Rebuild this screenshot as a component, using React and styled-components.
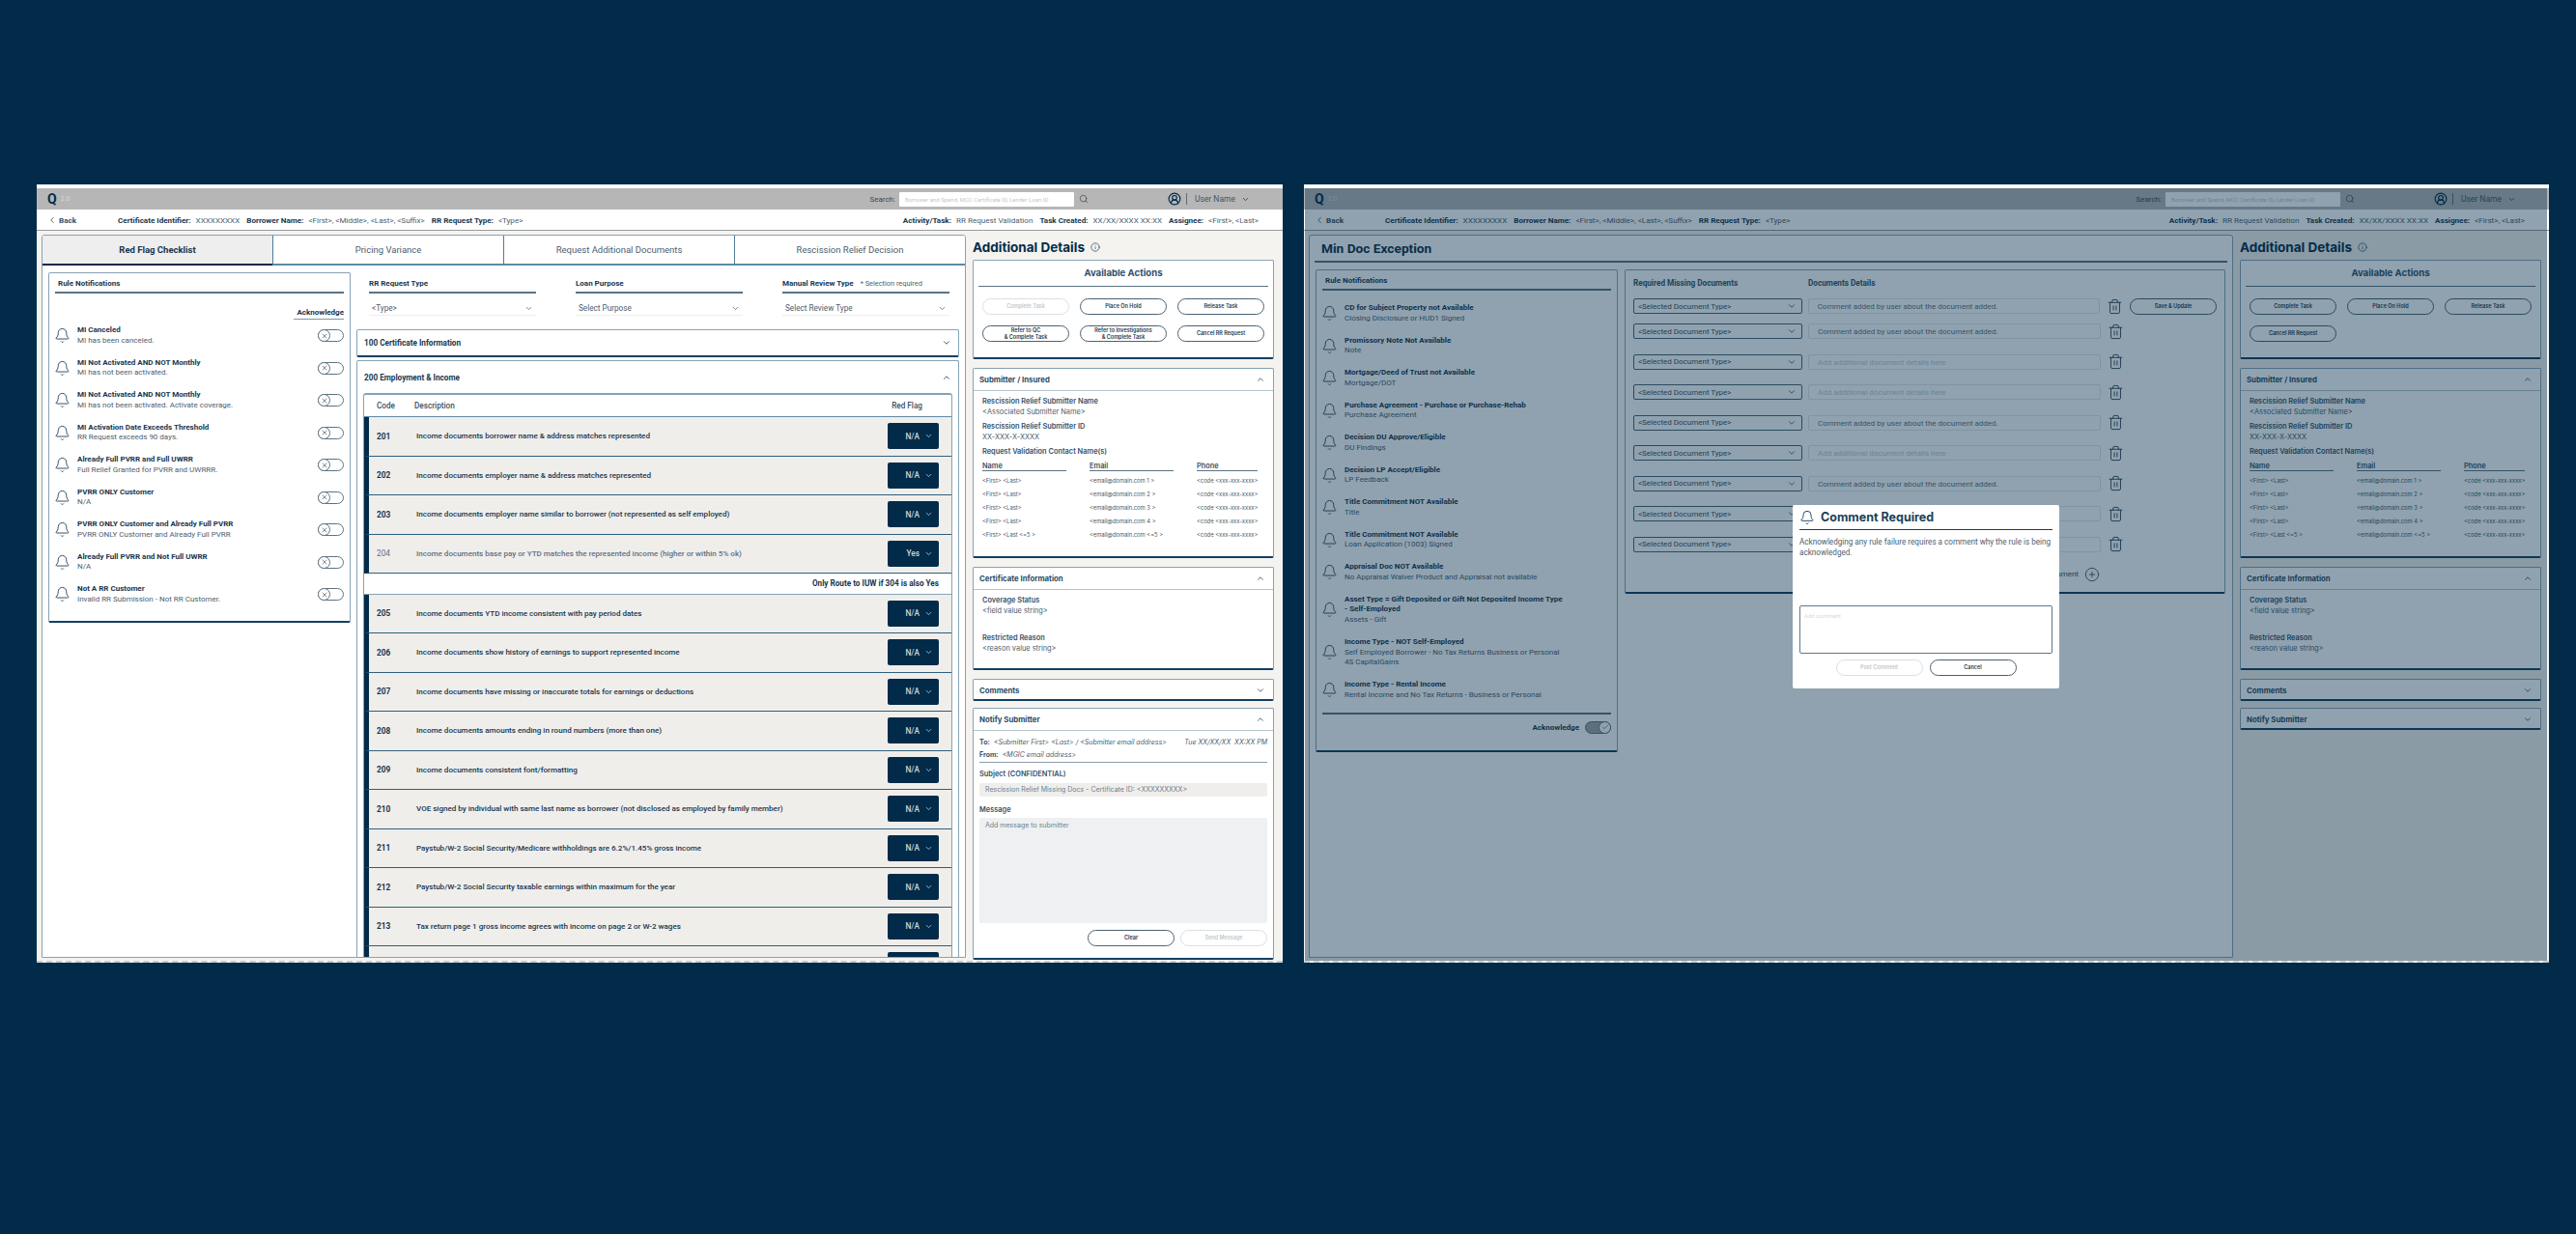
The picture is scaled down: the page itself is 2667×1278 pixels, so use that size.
import React from 'react';
import styled, { createGlobalStyle } from 'styled-components';
import { Bell, Check, ChevronDown, ChevronLeft, ChevronUp, CirclePlus, CircleUserRound, Info, Search, Trash2, X } from 'lucide-react';

const navy = '#022b49';
const ink = '#17364f';
const soft = '#4c6070';
const line = '#86a3b6';

const Global = createGlobalStyle`
  * { box-sizing: border-box; }
  body { margin: 0; background: ${navy}; font-family: Roboto, sans-serif; color: ${ink}; }
`;

const Page = styled.div`
  height: 1278px;
  overflow: hidden;
  background: ${navy};
  padding: 191px 0 0 38px;
  display: flex;
  gap: 22px;
`;

const Frame = styled.div`
  position: relative;
  width: ${p => p.$width}px;
  height: 806px;
  flex: none;
  display: flex;
  flex-direction: column;
  overflow: hidden;
  background: #f5f3ef;
  border-top: 4px solid #fff;
  border-bottom: 2px dashed #c9cdd0;
`;

const Overlay = styled.div`
  position: absolute;
  inset: -2px 2px -2px 1px;
  background: rgba(2, 43, 73, 0.44);
`;

/* top grey bar */
const TopBar = styled.div`
  height: 22px;
  flex: none;
  display: flex;
  align-items: center;
  background: #b6b6b6;
  padding: 0 34px 0 11px;
`;
const Logo = styled.span`
  font: 700 14px Roboto, sans-serif;
  color: ${navy};
`;
const LogoVersion = styled.span`
  margin-left: 4px;
  font-size: 7px;
  color: #d6d6d6;
`;
const SearchLabel = styled.span`
  margin-left: auto;
  margin-right: 4px;
  font-size: 8px;
  color: #3d4a54;
`;
const SearchBox = styled.div`
  width: 181px;
  height: 15px;
  background: #fff;
  border-radius: 1px;
  padding-left: 6px;
  font-size: 6px;
  line-height: 15px;
  color: #c4c7ca;
  white-space: nowrap;
  overflow: hidden;
`;
const SearchIcon = styled(Search)`
  margin: 0 82px 0 5px;
  color: #4b5a66;
`;
const UserIcon = styled(CircleUserRound)`
  color: ${navy};
`;
const Divider = styled.span`
  width: 1px;
  height: 12px;
  background: #5c6b76;
  margin: 0 8px 0 5px;
`;
const UserName = styled.span`
  font-size: 8.5px;
  color: #45545f;
  margin-right: 6px;
`;

/* certificate row */
const InfoRow = styled.div`
  height: 22px;
  flex: none;
  display: flex;
  align-items: center;
  gap: 5px;
  background: #fff;
  border-bottom: 1px solid #9b9b9b;
  padding: 0 23px 0 11px;
  font-size: 8.1px;
  white-space: nowrap;
`;
const BackLink = styled.span`
  display: flex;
  align-items: center;
  gap: 2px;
  width: 68px;
  font-weight: 700;
  color: #3d5060;
`;
const InfoLabel = styled.b`
  color: ${ink};
`;
const InfoValue = styled.span`
  color: ${soft};
  margin-right: 2px;
`;
const Spacer = styled.span`
  flex: 1;
`;

const Body = styled.div`
  flex: 1;
  min-height: 0;
  display: flex;
  align-items: flex-start;
  gap: 7px;
  padding: 4px 0 0 5px;
`;
const Main = styled.div`
  width: 957px;
  height: 749px;
  flex: none;
  background: #fff;
  border: 1px solid ${line};
  border-radius: 3px 3px 0 0;
  overflow: hidden;
`;

/* tabs */
const Tabs = styled.div`
  display: flex;
  height: 31px;
`;
const Tab = styled.div`
  flex: 1;
  display: flex;
  align-items: center;
  justify-content: center;
  font-size: 9.5px;
  font-weight: ${p => (p.$active ? 700 : 400)};
  color: ${p => (p.$active ? ink : soft)};
  background: ${p => (p.$active ? '#eeeeee' : '#fff')};
  border-bottom: 2px solid ${p => (p.$active ? navy : '#5f8aa6')};
  & + & { border-left: 1px solid #4f7b98; }
`;
const Content = styled.div`
  display: grid;
  grid-template-columns: 313px 624px;
  gap: 6px;
  align-items: start;
  padding: 7px 0 0 6px;
`;

const Card = styled.div`
  background: #fff;
  border: 1px solid ${line};
  border-bottom: 2px solid #123f60;
  border-radius: 2px;
`;

/* rule list */
const RuleCard = styled(Card)`
  padding: 0 6px;
  height: ${p => p.$height}px;
`;
const CardTitle = styled.div`
  height: 21px;
  padding: 6px 0 0 3px;
  border-bottom: 2px solid #5b7384;
  font-size: 8px;
  font-weight: 700;
`;
const RuleGap = styled.div`
  height: 7px;
`;
const AckHead = styled.div`
  display: flex;
  justify-content: flex-end;
  height: 27px;
  align-items: flex-end;
`;
const AckLabel = styled.span`
  font-size: 8px;
  font-weight: 700;
  padding: 0 0 2px 3px;
  border-bottom: 1px solid #7f97a8;
`;
const RuleRow = styled.div`
  display: flex;
  align-items: center;
  padding: 6px 0;
`;
const RuleBell = styled(Bell)`
  flex: none;
  margin: 0 7px 0 -1px;
  color: #2a4358;
`;
const RuleText = styled.div`
  flex: 1;
  font-size: 8px;
  line-height: 10.75px;
  white-space: pre-wrap;
`;
const RuleTitle = styled.div`
  font-weight: 700;
`;
const RuleSub = styled.div`
  color: ${soft};
`;
const ToggleTrack = styled.span`
  width: 27px;
  height: 13px;
  flex: none;
  display: flex;
  justify-content: ${p => (p.$on ? 'flex-end' : 'flex-start')};
  border: 1px solid #5d7383;
  border-radius: 7px;
  background: ${p => (p.$on ? '#a5a5a5' : '#fff')};
`;
const ToggleKnob = styled.span`
  width: 13px;
  height: 13px;
  margin: -1px;
  display: flex;
  align-items: center;
  justify-content: center;
  border: 1px solid #5d7383;
  border-radius: 50%;
  background: #fff;
  color: #42596b;
`;
const AckFoot = styled.div`
  display: flex;
  align-items: center;
  justify-content: flex-end;
  gap: 6px;
  margin-top: 6px;
  padding-top: 7px;
  border-top: 2px solid #5b7384;
  font-size: 8px;
  font-weight: 700;
`;

/* right part of red flag tab */
const FieldGrid = styled.div`
  display: grid;
  grid-template-columns: repeat(3, 173px);
  gap: 41px;
  margin: 0 0 14px 13px;
`;
const FieldLabel = styled.div`
  height: 22px;
  padding-top: 7px;
  border-bottom: 2px solid #5b7384;
  font-size: 8px;
  font-weight: 700;
  white-space: nowrap;
`;
const Required = styled.span`
  margin-left: 7px;
  font-size: 7.4px;
  font-weight: 400;
  color: ${soft};
`;
const FieldSelect = styled.div`
  height: 15px;
  margin-top: 8px;
  padding: 0 3px;
  display: flex;
  align-items: center;
  justify-content: space-between;
  font-size: 8.2px;
  color: ${soft};
  border-bottom: 1px solid #eeeeee;
`;
const SectionCard = styled(Card)`
  margin-bottom: 3px;
`;
const SectionHead = styled.div`
  height: ${p => p.$height}px;
  display: flex;
  align-items: center;
  justify-content: space-between;
  padding: 0 7px;
  font-size: 8.2px;
  font-weight: 700;
  color: ${ink};
`;
const OpenCard = styled(Card)`
  border-bottom: 0;
`;
const Table = styled.div`
  margin: 0 6px;
  border: 1px solid ${line};
  border-top-width: 2px;
  border-radius: 3px 3px 0 0;
`;
const TableHead = styled.div`
  height: 23px;
  display: flex;
  align-items: center;
  font-size: 8.2px;
  font-weight: 500;
  color: #3b5163;
  padding: 0 17px 0 13px;
  border-bottom: 1px solid #5f8aa6;
`;
const HeadCode = styled.span`
  width: 39px;
`;
const HeadFlag = styled.span`
  margin-left: auto;
  margin-right: 13px;
`;
const Row = styled.div`
  height: 40.5px;
  display: flex;
  align-items: center;
  background: #f0eeeb;
  border-left: 5px solid ${navy};
  border-bottom: 1.5px solid #2e5f80;
  font-size: 8.05px;
  font-weight: 500;
  color: ${p => (p.$muted ? '#607181' : ink)};
`;
const RowCode = styled.span`
  width: 49px;
  flex: none;
  padding-left: 8px;
  font-size: 8.3px;
  font-weight: ${p => (p.$muted ? 400 : 700)};
`;
const RowText = styled.span`
  flex: 1;
`;
const FlagSelect = styled.div`
  width: 53px;
  height: 27px;
  margin-right: 13px;
  flex: none;
  display: flex;
  align-items: center;
  justify-content: flex-end;
  gap: 5px;
  padding-right: 6px;
  background: ${navy};
  border-radius: 2px;
  color: #c9d5dd;
  font-size: 8.3px;
`;
const RouteNote = styled.div`
  height: 21.5px;
  display: flex;
  align-items: center;
  justify-content: flex-end;
  padding-right: 13px;
  font-size: 8.2px;
  font-weight: 700;
  border-bottom: 1px solid ${line};
  background: #fff;
`;

/* side column */
const Side = styled.div`
  width: 312px;
  flex: none;
  display: flex;
  flex-direction: column;
  font-family: Inter, sans-serif;
`;
const SideTitle = styled.div`
  height: 26px;
  flex: none;
  display: flex;
  align-items: center;
  gap: 6px;
  font-size: 13.5px;
  font-weight: 700;
  color: ${navy};
`;
const ActionsCard = styled(Card)`
  height: 103px;
  flex: none;
  margin-bottom: 9px;
  padding: 0 5px;
`;
const ActionsTitle = styled.div`
  height: 27px;
  line-height: 26px;
  text-align: center;
  font-size: 9.6px;
  font-weight: 700;
  color: #30506a;
  border-bottom: 1px solid #5b7384;
`;
const ActionsGrid = styled.div`
  display: grid;
  grid-template-columns: repeat(3, 90px);
  gap: 11px 11px;
  justify-content: center;
  margin-top: 12px;
`;
const Pill = styled.div`
  width: 90px;
  height: 17px;
  flex: none;
  display: flex;
  align-items: center;
  justify-content: center;
  text-align: center;
  font: 600 5.5px/7px Inter, sans-serif;
  color: ${p => (p.$disabled ? '#c4c8cb' : '#1e3a50')};
  background: #fff;
  border: 1px solid ${p => (p.$disabled ? '#dcdfe1' : '#4a6274')};
  border-bottom-width: 1.5px;
  border-radius: 9px;
`;
const SideCard = styled(Card)`
  height: ${p => p.$height}px;
  flex: none;
  margin-bottom: ${p => p.$gap}px;
  overflow: hidden;
`;
const SideHead = styled.div`
  height: ${p => p.$height || 23}px;
  display: flex;
  align-items: center;
  justify-content: space-between;
  padding: 0 8px 0 6px;
  font-size: 7.8px;
  font-weight: 700;
  color: #2b4c66;
  border-bottom: ${p => (p.$open ? '1px solid #b5c4ce' : 0)};
`;
const SideBody = styled.div`
  padding: 6px 9px;
`;
const SideLabel = styled.div`
  font-size: 7.4px;
  font-weight: 600;
  line-height: 10.5px;
  color: #37536a;
`;
const SideValue = styled.div`
  font-size: 7.4px;
  line-height: 10.5px;
  color: ${soft};
  margin-bottom: ${p => p.$gap}px;
`;
const ContactGrid = styled.div`
  display: grid;
  grid-template-columns: 87px 87px 63px;
  column-gap: 24px;
  margin-top: 4px;
`;
const ContactHead = styled.div`
  font-size: 7.4px;
  line-height: 9px;
  font-weight: 600;
  color: #37536a;
  border-bottom: 1px solid #5b7384;
  margin-bottom: 3px;
`;
const ContactCell = styled.div`
  font-size: 5.8px;
  line-height: 14px;
  white-space: nowrap;
  color: #455a6a;
`;
const MailLine = styled.div`
  display: flex;
  font-size: 7px;
  line-height: 12.5px;
  color: ${soft};
  font-style: ${p => (p.$italic ? 'italic' : 'normal')};
  white-space: nowrap;
`;
const MailKey = styled.b`
  font-style: normal;
  color: #37536a;
  margin-right: 4px;
`;
const MailBody = styled.div`
  padding: 6px 6px 0;
`;
const MailRule = styled.div`
  border-top: 1px solid #8c9ca8;
  margin: 1px 0 7px;
`;
const MailInput = styled.div`
  height: ${p => p.$height}px;
  margin: 3px 0 ${p => p.$gap}px;
  padding: ${p => (p.$height > 20 ? 3 : 0)}px 6px;
  line-height: ${p => (p.$height > 20 ? 10 : p.$height)}px;
  font-size: 7px;
  color: #6f8090;
  background: ${p => (p.$height > 20 ? '#eef0f2' : '#f0eeeb')};
  border-radius: 2px;
`;
const MailActions = styled.div`
  display: flex;
  justify-content: flex-end;
  gap: 6px;
`;

/* min doc exception screen */
const DocTitle = styled.div`
  height: 28px;
  margin: 0 5px;
  padding-left: 7px;
  display: flex;
  align-items: center;
  font-size: 13.7px;
  font-weight: 700;
  color: #10304a;
  border-bottom: 2px solid #5b7384;
`;
const DocGrid = styled(Content)`
  grid-template-columns: 313px 622px;
  gap: 7px;
`;
const DocPanel = styled(Card)`
  height: 336px;
  padding: 8px 8px 0;
`;
const DocHead = styled.div`
  height: 12px;
  margin-bottom: 9px;
  display: flex;
  gap: 6px;
  font-size: 8.2px;
  font-weight: 700;
  color: #37536a;
`;
const DocHeadCell = styled.span`
  width: 175px;
`;
const DocRow = styled.div`
  display: flex;
  align-items: center;
  height: 16px;
  margin-top: ${p => (p.$tight ? 10 : p.$first ? 0 : 15.5)}px;
`;
const DocSelect = styled.div`
  width: 175px;
  height: 100%;
  margin-right: 6px;
  padding: 0 5px 0 4px;
  display: flex;
  align-items: center;
  justify-content: space-between;
  font-size: 8px;
  color: #3a4f60;
  background: #fff;
  border: 1px solid #4a6274;
  border-bottom-width: 1.5px;
  border-radius: 2px;
`;
const DocInput = styled.div`
  width: 303px;
  height: 100%;
  padding-left: 9px;
  font-size: 8px;
  line-height: 15px;
  color: ${p => (p.$empty ? '#c3c8cc' : '#65727d')};
  border: 1px solid #e1e4e6;
  border-radius: 2px;
`;
const DocTrash = styled(Trash2)`
  margin: 0 7px;
  color: #2a4358;
`;
const AddRow = styled.div`
  display: flex;
  align-items: center;
  justify-content: flex-end;
  gap: 6px;
  margin: 15px 121px 0 0;
  font-size: 8px;
  color: #3a4f60;
`;

/* comment modal */
const Modal = styled.div`
  position: absolute;
  left: 506px;
  top: 328px;
  width: 276px;
  height: 190px;
  padding: 0 7px;
  background: #fff;
  border-radius: 2px;
`;
const ModalHead = styled.div`
  height: 26px;
  display: flex;
  align-items: center;
  gap: 6px;
  border-bottom: 1.5px solid #1b3f59;
  font: 700 12.5px Inter, sans-serif;
  color: #1b3f59;
`;
const ModalText = styled.div`
  height: 78px;
  padding-top: 7px;
  font-size: 8.15px;
  line-height: 11px;
  color: #4c6070;
`;
const ModalArea = styled.div`
  height: 50px;
  padding: 6px 4px;
  font-size: 6px;
  color: #d4d8db;
  border: 1px solid #60788a;
  border-bottom-width: 1.5px;
  border-radius: 2px;
`;
const ModalActions = styled.div`
  display: flex;
  justify-content: center;
  gap: 7px;
  margin-top: 6px;
`;

const rules = [
  ['MI Canceled', 'MI has been canceled.'],
  ['MI Not Activated AND NOT Monthly', 'MI has not been activated.'],
  ['MI Not Activated AND NOT Monthly', 'MI has not been activated. Activate coverage.'],
  ['MI Activation Date Exceeds Threshold', 'RR Request exceeds 90 days.'],
  ['Already Full PVRR and Full UWRR', 'Full Relief Granted for PVRR and UWRRR.'],
  ['PVRR ONLY Customer', 'N/A'],
  ['PVRR ONLY Customer and Already Full PVRR', 'PVRR ONLY Customer and Already Full PVRR'],
  ['Already Full PVRR and Not Full UWRR', 'N/A'],
  ['Not A RR Customer', 'Invalid RR Submission - Not RR Customer.'],
];

const docRules = [
  ['CD for Subject Property not Available', 'Closing Disclosure or HUD1 Signed'],
  ['Promissory Note Not Available', 'Note'],
  ['Mortgage/Deed of Trust not Available', 'Mortgage/DOT'],
  ['Purchase Agreement - Purchase or Purchase-Rehab', 'Purchase Agreement'],
  ['Decision DU Approve/Eligible', 'DU Findings'],
  ['Decision LP Accept/Eligible', 'LP Feedback'],
  ['Title Commitment NOT Available', 'Title'],
  ['Title Commitment NOT Available', 'Loan Application (1003) Signed'],
  ['Appraisal Doc NOT Available', 'No Appraisal Waiver Product and Appraisal not available'],
  ['Asset Type = Gift Deposited or Gift Not Deposited Income Type\n- Self-Employed', 'Assets - Gift'],
  ['Income Type - NOT Self-Employed', 'Self Employed Borrower - No Tax Returns Business or Personal\n4S CapitalGains'],
  ['Income Type - Rental Income', 'Rental Income and No Tax Returns - Business or Personal'],
];

const flagsA = [
  ['201', 'Income documents borrower name & address matches represented', 'N/A'],
  ['202', 'Income documents employer name & address matches represented', 'N/A'],
  ['203', 'Income documents employer name similar to borrower (not represented as self employed)', 'N/A'],
  ['204', 'Income documents base pay or YTD matches the represented income (higher or within 5% ok)', 'Yes', true],
];
const flagsB = [
  ['205', 'Income documents YTD income consistent with pay period dates'],
  ['206', 'Income documents show history of earnings to support represented income'],
  ['207', 'Income documents have missing or inaccurate totals for earnings or deductions'],
  ['208', 'Income documents amounts ending in round numbers (more than one)'],
  ['209', 'Income documents consistent font/formatting'],
  ['210', 'VOE signed by individual with same last name as borrower (not disclosed as employed by family member)'],
  ['211', 'Paystub/W-2 Social Security/Medicare withholdings are 6.2%/1.45% gross income'],
  ['212', 'Paystub/W-2 Social Security taxable earnings within maximum for the year'],
  ['213', 'Tax return page 1 gross income agrees with income on page 2 or W-2 wages'],
  ['214', ''],
];

const docRows = [false, false, true, true, false, true, false, true, true];

function Toggle({ on }) {
  return (
    <ToggleTrack $on={on}>
      <ToggleKnob>{on ? <Check size={8} /> : <X size={8} />}</ToggleKnob>
    </ToggleTrack>
  );
}

function RuleItem({ title, sub, toggle }) {
  return (
    <RuleRow>
      <RuleBell size={17} strokeWidth={1.3} />
      <RuleText>
        <RuleTitle>{title}</RuleTitle>
        <RuleSub>{sub}</RuleSub>
      </RuleText>
      {toggle && <Toggle />}
    </RuleRow>
  );
}

function Header() {
  return (
    <>
      <TopBar>
        <Logo>Q</Logo>
        <LogoVersion>2.0</LogoVersion>
        <SearchLabel>Search:</SearchLabel>
        <SearchBox>Borrower and Spend, MCC Certificate ID, Lender Loan ID</SearchBox>
        <SearchIcon size={10} />
        <UserIcon size={14} />
        <Divider />
        <UserName>User Name</UserName>
        <ChevronDown size={9} />
      </TopBar>
      <InfoRow>
        <BackLink><ChevronLeft size={10} />Back</BackLink>
        <InfoLabel>Certificate Identifier:</InfoLabel><InfoValue>XXXXXXXXX</InfoValue>
        <InfoLabel>Borrower Name:</InfoLabel><InfoValue>&lt;First&gt;, &lt;Middle&gt;, &lt;Last&gt;, &lt;Suffix&gt;</InfoValue>
        <InfoLabel>RR Request Type:</InfoLabel><InfoValue>&lt;Type&gt;</InfoValue>
        <Spacer />
        <InfoLabel>Activity/Task:</InfoLabel><InfoValue>RR Request Validation</InfoValue>
        <InfoLabel>Task Created:</InfoLabel><InfoValue>XX/XX/XXXX XX:XX</InfoValue>
        <InfoLabel>Assignee:</InfoLabel><InfoValue>&lt;First&gt;, &lt;Last&gt;</InfoValue>
      </InfoRow>
    </>
  );
}

function Contacts() {
  const suffixes = ['1', '2', '3', '4', '<=5'];
  return (
    <ContactGrid>
      <ContactHead>Name</ContactHead>
      <ContactHead>Email</ContactHead>
      <ContactHead>Phone</ContactHead>
      {suffixes.map((s, i) => (
        <React.Fragment key={s}>
          <ContactCell>{i === 4 ? '<First> <Last <=5 >' : '<First> <Last>'}</ContactCell>
          <ContactCell>{`<email@domain.com ${s} >`}</ContactCell>
          <ContactCell>{'<code <xxx-xxx-xxxx>'}</ContactCell>
        </React.Fragment>
      ))}
    </ContactGrid>
  );
}

function Details({ actions, notifyOpen }) {
  return (
    <Side>
      <SideTitle>Additional Details <Info size={10} color="#3f5a70" /></SideTitle>
      <ActionsCard>
        <ActionsTitle>Available Actions</ActionsTitle>
        <ActionsGrid>
          {actions.map(a => (
            <Pill key={a.label} $disabled={a.disabled}>
              <span>{a.label}{a.second && <br />}{a.second}</span>
            </Pill>
          ))}
        </ActionsGrid>
      </ActionsCard>
      <SideCard $height={197} $gap={9}>
        <SideHead $open>Submitter / Insured <ChevronUp size={10} /></SideHead>
        <SideBody>
          <SideLabel>Rescission Relief Submitter Name</SideLabel>
          <SideValue $gap={5}>&lt;Associated Submitter Name&gt;</SideValue>
          <SideLabel>Rescission Relief Submitter ID</SideLabel>
          <SideValue $gap={5}>XX-XXX-X-XXXX</SideValue>
          <SideLabel>Request Validation Contact Name(s)</SideLabel>
          <Contacts />
        </SideBody>
      </SideCard>
      <SideCard $height={107} $gap={9}>
        <SideHead $open>Certificate Information <ChevronUp size={10} /></SideHead>
        <SideBody>
          <SideLabel>Coverage Status</SideLabel>
          <SideValue $gap={18}>&lt;field value string&gt;</SideValue>
          <SideLabel>Restricted Reason</SideLabel>
          <SideValue $gap={0}>&lt;reason value string&gt;</SideValue>
        </SideBody>
      </SideCard>
      <SideCard $height={23} $gap={7}>
        <SideHead $height={21}>Comments <ChevronDown size={10} /></SideHead>
      </SideCard>
      {notifyOpen ? (
        <SideCard $height={261} $gap={0}>
          <SideHead $open>Notify Submitter <ChevronUp size={10} /></SideHead>
          <MailBody>
            <MailLine $italic>
              <MailKey>To:</MailKey>&lt;Submitter First&gt; &lt;Last&gt; / &lt;Submitter email address&gt;
              <Spacer />Tue XX/XX/XX&nbsp; XX:XX PM
            </MailLine>
            <MailLine $italic><MailKey>From:</MailKey>&lt;MGIC email address&gt;</MailLine>
            <MailRule />
            <SideLabel>Subject (CONFIDENTIAL)</SideLabel>
            <MailInput $height={14} $gap={9}>Rescission Relief Missing Docs - Certificate ID: &lt;XXXXXXXXX&gt;</MailInput>
            <SideLabel>Message</SideLabel>
            <MailInput $height={109} $gap={7}>Add message to submitter</MailInput>
            <MailActions>
              <Pill>Clear</Pill>
              <Pill $disabled>Send Message</Pill>
            </MailActions>
          </MailBody>
        </SideCard>
      ) : (
        <SideCard $height={23} $gap={0}>
          <SideHead $height={21}>Notify Submitter <ChevronDown size={10} /></SideHead>
        </SideCard>
      )}
    </Side>
  );
}

function FlagRow({ code, text, value = 'N/A', muted }) {
  return (
    <Row $muted={muted}>
      <RowCode $muted={muted}>{code}</RowCode>
      <RowText>{text}</RowText>
      <FlagSelect>{value}<ChevronDown size={9} /></FlagSelect>
    </Row>
  );
}

function Field({ label, value, required }) {
  return (
    <div>
      <FieldLabel>{label}{required && <Required>* Selection required</Required>}</FieldLabel>
      <FieldSelect>{value}<ChevronDown size={9} /></FieldSelect>
    </div>
  );
}

function RedFlagScreen() {
  return (
    <Frame $width={1290}>
      <Header />
      <Body>
        <Main>
          <Tabs>
            <Tab $active>Red Flag Checklist</Tab>
            <Tab>Pricing Variance</Tab>
            <Tab>Request Additional Documents</Tab>
            <Tab>Rescission Relief Decision</Tab>
          </Tabs>
          <Content>
            <RuleCard $height={363}>
              <CardTitle>Rule Notifications</CardTitle>
              <AckHead><AckLabel>Acknowledge</AckLabel></AckHead>
              {rules.map(([title, sub], i) => (
                <RuleItem key={i} title={title} sub={sub} toggle />
              ))}
            </RuleCard>
            <div>
              <FieldGrid>
                <Field label="RR Request Type" value="<Type>" />
                <Field label="Loan Purpose" value="Select Purpose" />
                <Field label="Manual Review Type" value="Select Review Type" required />
              </FieldGrid>
              <SectionCard>
                <SectionHead $height={26}>100 Certificate Information <ChevronDown size={10} /></SectionHead>
              </SectionCard>
              <OpenCard>
                <SectionHead $height={33}>200 Employment &amp; Income <ChevronUp size={10} /></SectionHead>
                <Table>
                  <TableHead>
                    <HeadCode>Code</HeadCode>
                    <span>Description</span>
                    <HeadFlag>Red Flag</HeadFlag>
                  </TableHead>
                  {flagsA.map(([code, text, value, muted]) => (
                    <FlagRow key={code} code={code} text={text} value={value} muted={muted} />
                  ))}
                  <RouteNote>Only Route to IUW if 304 is also Yes</RouteNote>
                  {flagsB.map(([code, text]) => (
                    <FlagRow key={code} code={code} text={text} />
                  ))}
                </Table>
              </OpenCard>
            </div>
          </Content>
        </Main>
        <Details
          notifyOpen
          actions={[
            { label: 'Complete Task', disabled: true },
            { label: 'Place On Hold' },
            { label: 'Release Task' },
            { label: 'Refer to QC', second: '& Complete Task' },
            { label: 'Refer to Investigations', second: '& Complete Task' },
            { label: 'Cancel RR Request' },
          ]}
        />
      </Body>
    </Frame>
  );
}

function MinDocScreen() {
  return (
    <Frame $width={1289}>
      <Header />
      <Body>
        <Main>
          <DocTitle>Min Doc Exception</DocTitle>
          <DocGrid>
            <RuleCard $height={500}>
              <CardTitle>Rule Notifications</CardTitle>
              <RuleGap />
              {docRules.map(([title, sub], i) => (
                <RuleItem key={i} title={title} sub={sub} />
              ))}
              <AckFoot>Acknowledge <Toggle on /></AckFoot>
            </RuleCard>
            <DocPanel>
              <DocHead>
                <DocHeadCell>Required Missing Documents</DocHeadCell>
                <span>Documents Details</span>
              </DocHead>
              {docRows.map((empty, i) => (
                <DocRow key={i} $first={i === 0} $tight={i === 1}>
                  <DocSelect>&lt;Selected Document Type&gt;<ChevronDown size={10} /></DocSelect>
                  <DocInput $empty={empty}>
                    {empty ? 'Add additional document details here' : 'Comment added by user about the document added.'}
                  </DocInput>
                  <DocTrash size={17} strokeWidth={1.3} />
                  {i === 0 && <Pill>Save &amp; Update</Pill>}
                </DocRow>
              ))}
              <AddRow>Add Additional Document <CirclePlus size={16} strokeWidth={1.3} /></AddRow>
            </DocPanel>
          </DocGrid>
        </Main>
        <Details
          actions={[
            { label: 'Complete Task' },
            { label: 'Place On Hold' },
            { label: 'Release Task' },
            { label: 'Cancel RR Request' },
          ]}
        />
      </Body>
      <Overlay />
      <Modal>
        <ModalHead><Bell size={16} strokeWidth={1.4} />Comment Required</ModalHead>
        <ModalText>Acknowledging any rule failure requires a comment why the rule is being acknowledged.</ModalText>
        <ModalArea>Add comment</ModalArea>
        <ModalActions>
          <Pill $disabled>Post Comment</Pill>
          <Pill>Cancel</Pill>
        </ModalActions>
      </Modal>
    </Frame>
  );
}

export default function App() {
  return (
    <Page>
      <Global />
      <RedFlagScreen />
      <MinDocScreen />
    </Page>
  );
}
